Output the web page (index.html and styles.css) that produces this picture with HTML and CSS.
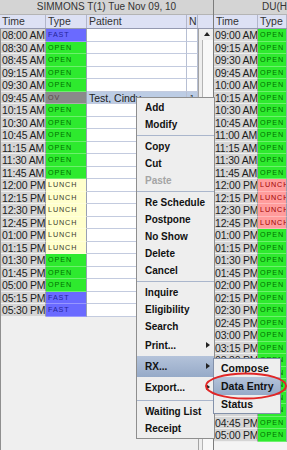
FILE: index.html
```html
<!DOCTYPE html>
<html lang="en">
<head>
  <meta charset="UTF-8">
  <title>Appointment Schedule</title>
  <link rel="stylesheet" href="styles.css">
</head>
<body>
  <div class="screen">

    <!-- Provider 1 -->
    <div class="panel panel-left">
      <div class="title">SIMMONS T(1) Tue Nov 09, 10</div>
      <div class="head">
        <span class="c-time">Time</span>
        <span class="c-type">Type</span>
        <span class="c-patient">Patient</span>
        <span class="c-n">N</span>
        <span class="c-corner"></span>
      </div>
      <div class="grid-wrap">
        <div class="rows">
          <div class="row"><span class="c-time">08:00 AM</span><span class="c-type fast">FAST</span><span class="c-patient"></span><span class="c-n"></span></div>
          <div class="row"><span class="c-time">08:30 AM</span><span class="c-type open">OPEN</span><span class="c-patient"></span><span class="c-n"></span></div>
          <div class="row"><span class="c-time">08:45 AM</span><span class="c-type open">OPEN</span><span class="c-patient"></span><span class="c-n"></span></div>
          <div class="row"><span class="c-time">09:15 AM</span><span class="c-type open">OPEN</span><span class="c-patient"></span><span class="c-n"></span></div>
          <div class="row"><span class="c-time">09:30 AM</span><span class="c-type open">OPEN</span><span class="c-patient"></span><span class="c-n"></span></div>
          <div class="row sel"><span class="c-time">09:45 AM</span><span class="c-type ov">OV</span><span class="c-patient">Test, Cindy</span><span class="c-n">1</span></div>
          <div class="row"><span class="c-time">10:15 AM</span><span class="c-type open">OPEN</span><span class="c-patient"></span><span class="c-n"></span></div>
          <div class="row"><span class="c-time">10:30 AM</span><span class="c-type open">OPEN</span><span class="c-patient"></span><span class="c-n"></span></div>
          <div class="row"><span class="c-time">10:45 AM</span><span class="c-type open">OPEN</span><span class="c-patient"></span><span class="c-n"></span></div>
          <div class="row"><span class="c-time">11:15 AM</span><span class="c-type open">OPEN</span><span class="c-patient"></span><span class="c-n"></span></div>
          <div class="row"><span class="c-time">11:30 AM</span><span class="c-type open">OPEN</span><span class="c-patient"></span><span class="c-n"></span></div>
          <div class="row"><span class="c-time">11:45 AM</span><span class="c-type open">OPEN</span><span class="c-patient"></span><span class="c-n"></span></div>
          <div class="row"><span class="c-time">12:00 PM</span><span class="c-type lunch">LUNCH</span><span class="c-patient"></span><span class="c-n"></span></div>
          <div class="row"><span class="c-time">12:15 PM</span><span class="c-type lunch">LUNCH</span><span class="c-patient"></span><span class="c-n"></span></div>
          <div class="row"><span class="c-time">12:30 PM</span><span class="c-type lunch">LUNCH</span><span class="c-patient"></span><span class="c-n"></span></div>
          <div class="row"><span class="c-time">12:45 PM</span><span class="c-type lunch">LUNCH</span><span class="c-patient"></span><span class="c-n"></span></div>
          <div class="row"><span class="c-time">01:00 PM</span><span class="c-type lunch">LUNCH</span><span class="c-patient"></span><span class="c-n"></span></div>
          <div class="row"><span class="c-time">01:15 PM</span><span class="c-type lunch">LUNCH</span><span class="c-patient"></span><span class="c-n"></span></div>
          <div class="row"><span class="c-time">01:30 PM</span><span class="c-type open">OPEN</span><span class="c-patient"></span><span class="c-n"></span></div>
          <div class="row"><span class="c-time">01:45 PM</span><span class="c-type open">OPEN</span><span class="c-patient"></span><span class="c-n"></span></div>
          <div class="row"><span class="c-time">05:00 PM</span><span class="c-type open">OPEN</span><span class="c-patient"></span><span class="c-n"></span></div>
          <div class="row"><span class="c-time">05:15 PM</span><span class="c-type fast">FAST</span><span class="c-patient"></span><span class="c-n"></span></div>
          <div class="row"><span class="c-time">05:30 PM</span><span class="c-type fast">FAST</span><span class="c-patient"></span><span class="c-n"></span></div>
        </div>
        <div class="scrollbar">
          <div class="sb-arrow"></div>
          <div class="sb-thumb"></div>
        </div>
      </div>
    </div>

    <!-- Provider 2 -->
    <div class="panel panel-right">
      <div class="title">DU(HALL) Tue Nov 09, 10</div>
      <div class="head">
        <span class="c-time">Time</span>
        <span class="c-type">Type</span>
      </div>
      <div class="rows">
        <div class="row"><span class="c-time">09:00 AM</span><span class="c-type open">OPEN</span></div>
        <div class="row"><span class="c-time">09:15 AM</span><span class="c-type open">OPEN</span></div>
        <div class="row"><span class="c-time">09:30 AM</span><span class="c-type open">OPEN</span></div>
        <div class="row"><span class="c-time">09:45 AM</span><span class="c-type open">OPEN</span></div>
        <div class="row"><span class="c-time">10:00 AM</span><span class="c-type open">OPEN</span></div>
        <div class="row"><span class="c-time">10:15 AM</span><span class="c-type open">OPEN</span></div>
        <div class="row"><span class="c-time">10:30 AM</span><span class="c-type open">OPEN</span></div>
        <div class="row"><span class="c-time">10:45 AM</span><span class="c-type open">OPEN</span></div>
        <div class="row"><span class="c-time">11:00 AM</span><span class="c-type open">OPEN</span></div>
        <div class="row"><span class="c-time">11:15 AM</span><span class="c-type open">OPEN</span></div>
        <div class="row"><span class="c-time">11:30 AM</span><span class="c-type open">OPEN</span></div>
        <div class="row"><span class="c-time">11:45 AM</span><span class="c-type open">OPEN</span></div>
        <div class="row"><span class="c-time">12:00 PM</span><span class="c-type lunch-red">LUNCH</span></div>
        <div class="row"><span class="c-time">12:15 PM</span><span class="c-type lunch-red">LUNCH</span></div>
        <div class="row"><span class="c-time">12:30 PM</span><span class="c-type lunch-red">LUNCH</span></div>
        <div class="row"><span class="c-time">12:45 PM</span><span class="c-type lunch-red">LUNCH</span></div>
        <div class="row"><span class="c-time">01:00 PM</span><span class="c-type open">OPEN</span></div>
        <div class="row"><span class="c-time">01:15 PM</span><span class="c-type open">OPEN</span></div>
        <div class="row"><span class="c-time">01:30 PM</span><span class="c-type open">OPEN</span></div>
        <div class="row"><span class="c-time">01:45 PM</span><span class="c-type open">OPEN</span></div>
        <div class="row"><span class="c-time">02:00 PM</span><span class="c-type open">OPEN</span></div>
        <div class="row"><span class="c-time">02:15 PM</span><span class="c-type open">OPEN</span></div>
        <div class="row"><span class="c-time">02:30 PM</span><span class="c-type open">OPEN</span></div>
        <div class="row"><span class="c-time">02:45 PM</span><span class="c-type open">OPEN</span></div>
        <div class="row"><span class="c-time">03:00 PM</span><span class="c-type open">OPEN</span></div>
        <div class="row"><span class="c-time">03:15 PM</span><span class="c-type open">OPEN</span></div>
        <div class="row"><span class="c-time">03:30 PM</span><span class="c-type open">OPEN</span></div>
        <div class="row"><span class="c-time">03:45 PM</span><span class="c-type open">OPEN</span></div>
        <div class="row"><span class="c-time">04:00 PM</span><span class="c-type open">OPEN</span></div>
        <div class="row"><span class="c-time">04:15 PM</span><span class="c-type open">OPEN</span></div>
        <div class="row"><span class="c-time">04:30 PM</span><span class="c-type open">OPEN</span></div>
        <div class="row"><span class="c-time">04:45 PM</span><span class="c-type open">OPEN</span></div>
        <div class="row"><span class="c-time">05:00 PM</span><span class="c-type open">OPEN</span></div>
      </div>
    </div>

    <!-- Right-click menu -->
    <div class="menu">
      <div class="menu-item">Add</div>
      <div class="menu-item">Modify</div>
      <div class="menu-sep"></div>
      <div class="menu-item">Copy</div>
      <div class="menu-item">Cut</div>
      <div class="menu-item off">Paste</div>
      <div class="menu-sep"></div>
      <div class="menu-item">Re Schedule</div>
      <div class="menu-item">Postpone</div>
      <div class="menu-item">No Show</div>
      <div class="menu-item">Delete</div>
      <div class="menu-item">Cancel</div>
      <div class="menu-sep"></div>
      <div class="menu-item">Inquire</div>
      <div class="menu-item">Eligibility</div>
      <div class="menu-item">Search</div>
      <div class="menu-item more">Print...</div>
      <div class="menu-item more active">RX...</div>
      <div class="menu-item more">Export...</div>
      <div class="menu-sep"></div>
      <div class="menu-item">Waiting List</div>
      <div class="menu-item">Receipt</div>
    </div>

    <!-- RX submenu -->
    <div class="submenu">
      <div class="menu-item">Compose</div>
      <div class="menu-item active">Data Entry</div>
      <div class="menu-item">Status</div>
    </div>

    <svg class="ring" width="84" height="28" viewBox="0 0 84 28">
      <ellipse cx="42" cy="14" rx="40" ry="12.5" fill="none" stroke="#e02626" stroke-width="2"/>
    </svg>
  </div>
</body>
</html>
```

FILE: styles.css
```css
* {
  box-sizing: border-box;
}
body {
  margin: 0;
  font-family: "Liberation Sans", Arial, sans-serif;
  background: #efefef;
}
.screen {
  position: relative;
  display: flex;
  width: 287px;
  height: 450px;
  overflow: hidden;
  background: #efefef;
}
.panel {
  display: flex;
  flex-direction: column;
}
.panel-left {
  width: 213px;
  flex: none;
}
.panel-right {
  flex: 1;
  min-width: 0;
  border-left: 1px solid #7c7c7c;
  background: #f4f4f4;
}

/* title + column headers */
.title {
  height: 15px;
  background: #d4d4d4;
  border-bottom: 1px solid #b4b4b4;
  font-size: 10px;
  line-height: 14px;
  color: #333;
  text-align: center;
  white-space: nowrap;
  overflow: hidden;
}
.panel-right .title {
  text-align: left;
  padding-left: 48px;
}
.head {
  display: flex;
  height: 14px;
  background: #dde1f4;
  border-bottom: 1px solid #9499b0;
  font-size: 10.5px;
  line-height: 13px;
  color: #333;
  white-space: nowrap;
}
.head span {
  border-right: 1px solid #b2b6ca;
  padding-left: 2px;
}
.head .c-corner {
  border-right: none;
}

/* columns */
.c-time {
  width: 46px;
  flex: none;
}
.rows .c-time {
  width: 45px;
}
.c-type {
  width: 41px;
  flex: none;
}
.c-patient {
  width: 100px;
  flex: none;
}
.c-n {
  width: 11px;
  flex: none;
}
.c-corner {
  flex: 1;
}
.panel-right .c-time {
  width: 44px;
}
.panel-right .c-type {
  flex: 1;
}

/* grid */
.grid-wrap {
  flex: 1;
  display: flex;
}
.panel-left .rows {
  width: 198px;
  border-left: 1px solid #8f8f8f;
}
.row {
  display: flex;
  height: 12.5px;
  font-size: 10.5px;
  line-height: 12px;
  white-space: nowrap;
}
.row span {
  height: 100%;
  overflow: hidden;
}
.row .c-time {
  background: #d5d5d5;
  color: #1c1c1c;
  border-right: 1px solid #9c9c9c;
  border-bottom: 1px solid #eeeeee;
  padding-left: 1px;
  letter-spacing: -0.2px;
}
.row .c-type {
  font-size: 7.2px;
  letter-spacing: 0.9px;
  padding-left: 2px;
  border-right: 1px solid #98a0b4;
  border-bottom: 1px solid rgba(255, 255, 255, 0.3);
}
.row .c-patient,
.row .c-n {
  background: #fff;
  color: #222;
  border-right: 1px solid #b7bfd3;
  border-bottom: 1px solid #c3cbdf;
  padding-left: 2px;
}
.row .c-n {
  font-size: 8px;
  text-align: center;
  padding-left: 0;
}
.row.sel .c-patient,
.row.sel .c-n {
  background: #bccce4;
}

.fast {
  background: #6a6aff;
  color: #25259a;
}
.open {
  background: #2eea2e;
  color: #006e00;
}
.lunch {
  background: #ffffcc;
  color: #3a3a2a;
}
.lunch-red {
  background: #ff9c9c;
  color: #a00000;
}
.ov {
  background: #8a8a8a;
  color: #584646;
}

/* scrollbar */
.scrollbar {
  width: 15px;
  display: flex;
  flex-direction: column;
  background: #eeeeee;
  border-left: 1px solid #a4a4a4;
}
.sb-arrow {
  height: 11px;
  position: relative;
}
.sb-arrow::after {
  content: "";
  position: absolute;
  left: 5px;
  top: 3px;
  border-bottom: 4px solid #222;
  border-left: 3px solid transparent;
  border-right: 3px solid transparent;
}
.sb-thumb {
  flex: 1;
  margin-left: 3px;
  border-left: 1px solid #b4b4b4;
  background: #f8f8f8;
}

/* popup menus */
.menu {
  position: absolute;
  left: 136px;
  top: 97px;
  width: 79px;
  padding: 1px 0;
  background: #eeeeee;
  border: 1px solid #8e8e8e;
  font-size: 10px;
  font-weight: bold;
  color: #111;
}
.menu-item {
  position: relative;
  height: 17px;
  line-height: 17px;
  padding-left: 8px;
  white-space: nowrap;
}
.menu-item.more {
  height: 21px;
  line-height: 21px;
}
.menu-item.more::after {
  content: "";
  position: absolute;
  right: 4px;
  top: 7px;
  border-left: 4px solid #222;
  border-top: 3.5px solid transparent;
  border-bottom: 3.5px solid transparent;
}
.menu-item.off {
  color: #a4a4a4;
}
.menu-item.active {
  background: linear-gradient(#b4c3da, #96aac8);
}
.menu-sep {
  margin: 2px 0;
  border-top: 1px solid #aab6cc;
}
.submenu {
  position: absolute;
  left: 213px;
  top: 358px;
  width: 68px;
  background: #eeeeee;
  border: 1px solid #8391aa;
  font-size: 10.5px;
  font-weight: bold;
  color: #111;
}
.submenu .menu-item {
  height: 18px;
  line-height: 18px;
  padding-left: 7px;
}
.ring {
  position: absolute;
  left: 204px;
  top: 372px;
}
```
